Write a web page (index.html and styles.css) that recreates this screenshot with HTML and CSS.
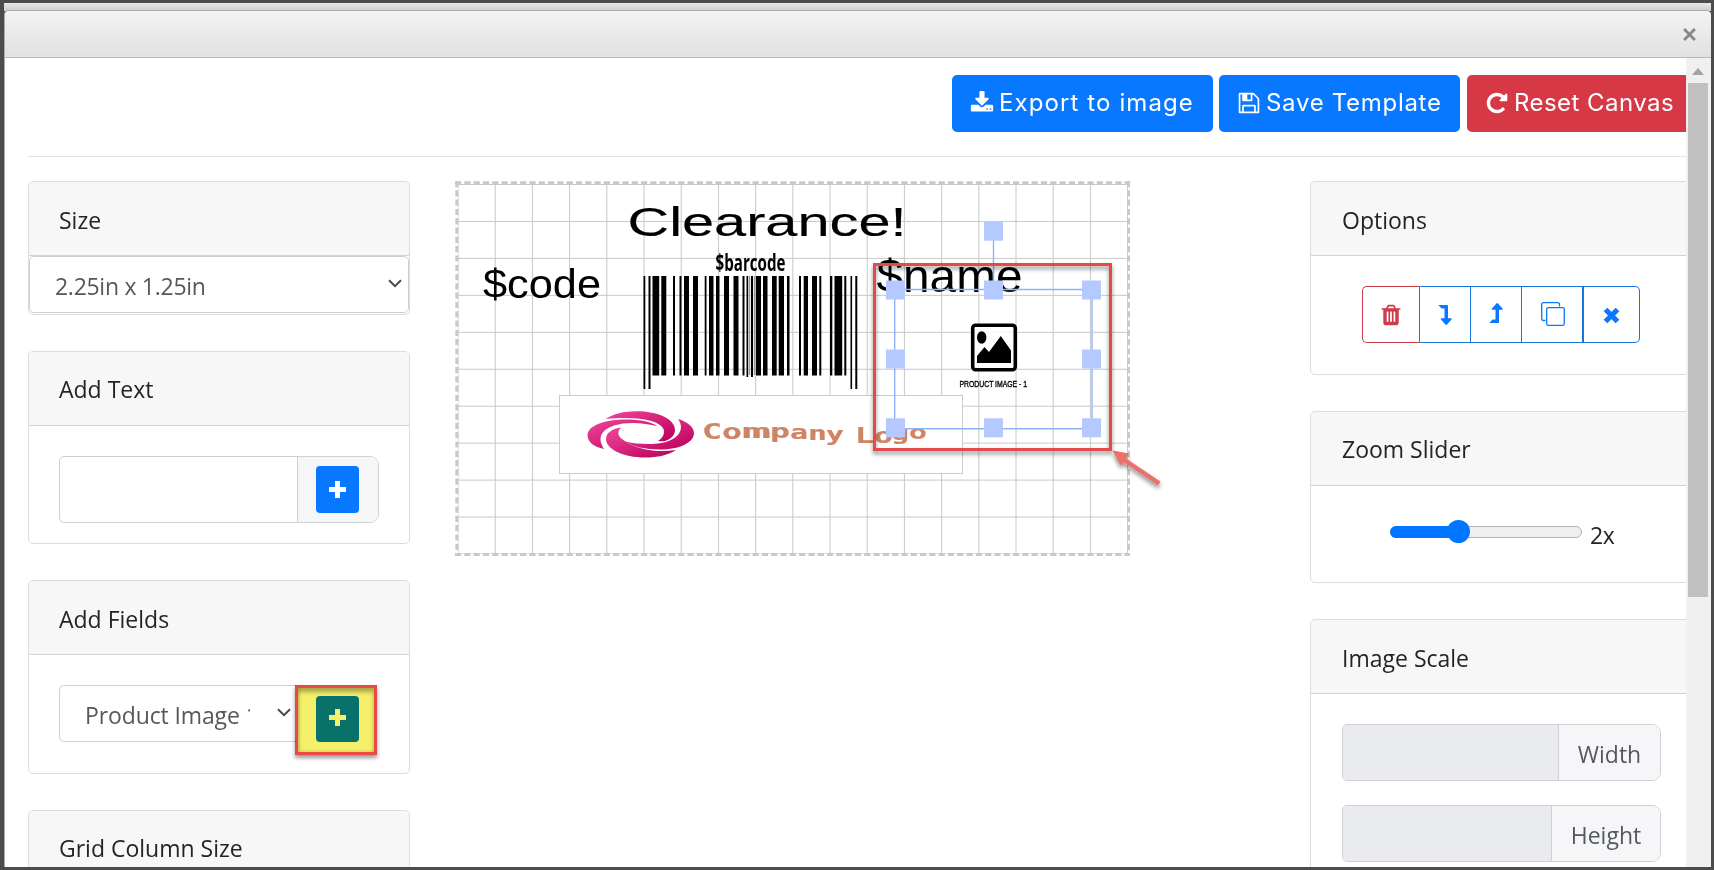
FILE: index.html
```
<!DOCTYPE html>
<html lang="en">
<head>
    <meta charset="UTF-8">
    <title>Label Designer</title>
    <link rel="stylesheet" href="styles.css">
</head>
<body>
<div class="modal">
    <div class="modal-header">
        <svg class="close" viewBox="0 0 12 12"><path d="M1 1l10 10M11 1l-10 10"/></svg>
    </div>
    <div class="modal-body">
        <div class="content">
            <div class="toolbar">
                <button class="btn btn-export">
                    <svg class="fa" viewBox="0 0 1792 1792"><path d="M1344 1344q0-26-19-45t-45-19-45 19-19 45 19 45 45 19 45-19 19-45zm256 0q0-26-19-45t-45-19-45 19-19 45 19 45 45 19 45-19 19-45zm128-224v320q0 40-28 68t-68 28h-1472q-40 0-68-28t-28-68v-320q0-40 28-68t68-28h465l135 136q58 56 136 56t136-56l136-136h464q40 0 68 28t28 68zm-325-569q17 41-14 70l-448 448q-18 19-45 19t-45-19l-448-448q-31-29-14-70 17-39 59-39h256v-448q0-26 19-45t45-19h256q26 0 45 19t19 45v448h256q42 0 59 39z"/></svg>
                    <span>Export to image</span>
                </button>
                <button class="btn btn-save">
                    <svg class="fa" viewBox="0 0 1792 1792"><path d="M512 1536h768v-384h-768v384zm896 0h128v-896q0-14-10-38.5t-20-34.5l-281-281q-10-10-34-20t-39-10v416q0 40-28 68t-68 28h-576q-40 0-68-28t-28-68v-416h-128v1280h128v-416q0-40 28-68t68-28h832q40 0 68 28t28 68v416zm-384-928v-320q0-13-9.5-22.5t-22.5-9.5h-192q-13 0-22.5 9.5t-9.5 22.5v320q0 13 9.5 22.5t22.5 9.5h192q13 0 22.5-9.5t9.5-22.5zm640 32v928q0 40-28 68t-68 28h-1344q-40 0-68-28t-28-68v-1344q0-40 28-68t68-28h928q40 0 88 20t76 48l280 280q28 28 48 76t20 88z"/></svg>
                    <span>Save Template</span>
                </button>
                <button class="btn btn-reset">
                    <svg class="fa" viewBox="0 0 1792 1792"><path d="M1664 256v448q0 26-19 45t-45 19h-448q-42 0-59-40-17-39 14-69l138-138q-148-137-349-137-104 0-198.5 40.5t-163.5 109.5-109.5 163.5-40.5 198.5 40.5 198.5 109.5 163.5 163.5 109.5 198.5 40.5q119 0 225-52t179-147q7-10 23-12 15 0 25 9l137 138q9 8 9.5 20.5t-7.5 22.5q-109 132-264 204.5t-327 72.5q-156 0-298-61t-245-164-164-245-61-298 61-298 164-245 245-164 298-61q147 0 284.5 55.5t244.5 156.5l130-129q29-31 70-14 39 17 39 59z"/></svg>
                    <span>Reset Canvas</span>
                </button>
            </div>
            <div class="columns">
                <div class="side-left">
                    <div class="card card-size">
                        <div class="card-header">Size</div>
                        <div class="select">
                            <span class="select-text">2.25in x 1.25in</span>
                            <svg class="caret" viewBox="0 0 14 9"><path d="M1 1.2l6 6 6-6"/></svg>
                        </div>
                    </div>
                    <div class="card card-text">
                        <div class="card-header">Add Text</div>
                        <div class="card-body">
                            <div class="input-group tall">
                                <div class="input"></div>
                                <div class="addon addon-btn">
                                    <div class="plus"><svg viewBox="0 0 17 17"><path d="M6 0h5v6h6v5h-6v6h-5v-6h-6v-5h6z"/></svg></div>
                                </div>
                            </div>
                        </div>
                    </div>
                    <div class="card card-fields">
                        <div class="card-header">Add Fields</div>
                        <div class="card-body">
                            <div class="field-group">
                                <div class="field-select">
                                    <span class="field-text">Product Image 1</span>
                                    <svg class="caret" viewBox="0 0 14 9"><path d="M1 1.2l6 6 6-6"/></svg>
                                </div>
                                <div class="field-add">
                                    <div class="plus"><svg viewBox="0 0 17 17"><path d="M6 0h5v6h6v5h-6v6h-5v-6h-6v-5h6z"/></svg></div>
                                </div>
                                <div class="highlight"></div>
                            </div>
                        </div>
                    </div>
                    <div class="card">
                        <div class="card-header">Grid Column Size</div>
                        <div class="card-body"></div>
                    </div>
                </div>

                <svg class="canvas" viewBox="455 181 675 375">
                    <defs>
                        <pattern id="grid" x="457.5" y="184" width="37.2" height="36.95" patternUnits="userSpaceOnUse">
                            <path d="M0 .5H38M.5 0V37" stroke="#c8c8c8" stroke-width="1.1" fill="none"/>
                        </pattern>
                        <linearGradient id="pink" x1="0" y1="0" x2="1" y2="1">
                            <stop offset="0" stop-color="#f2459b"/>
                            <stop offset="1" stop-color="#b8005c"/>
                        </linearGradient>
                        <filter id="shadow" x="-10%" y="-10%" width="120%" height="130%">
                            <feDropShadow dx="0" dy="3" stdDeviation="2" flood-color="#000" flood-opacity=".45"/>
                        </filter>
                    </defs>
                    <rect x="458" y="184" width="670" height="370" fill="url(#grid)"/>
                    <path d="M455 182.7H1130M455 554.5H1130" class="dash"/>
                    <path d="M456.8 181V556M1128.5 181V556" class="dash"/>

                    <text x="627.5" y="236" font-size="40" textLength="279" lengthAdjust="spacingAndGlyphs" class="wide">Clearance!</text>
                    <text x="483" y="298" font-size="41.5" textLength="118" lengthAdjust="spacingAndGlyphs">$code</text>
                    <text x="876.5" y="292.3" font-size="47" textLength="146" lengthAdjust="spacingAndGlyphs">$name</text>
                    <text x="715.5" y="270.5" font-size="24" font-weight="bold" textLength="70" lengthAdjust="spacingAndGlyphs" class="narrow">$barcode</text>

                    <!-- barcode -->
                    <g fill="#000">
                        <path d="M643.5 276h1.8v113h-1.8zM648.5 276h2v113h-2zM850.5 276h1.6v113h-1.6zM855.3 276h2v113h-2z"/>
                        <path d="M652.5 276h6.7v99.5h-6.7zM661.3 276h5v99.5h-5zM673 276h2v99.5h-2zM679.5 276h2v99.5h-2zM684 276h5v99.5h-5zM693 276h5v99.5h-5zM704.7 276h1.8v99.5h-1.8zM709 276h4.5v99.5h-4.5zM716 276h3.5v99.5h-3.5zM724 276h5v99.5h-5zM733.5 276h5v99.5h-5zM742.5 276h2v99.5h-2zM746.5 276h1.7v101h-1.7zM751 276h2v101h-2zM756 276h5v99.5h-5zM763 276h4.5v99.5h-4.5zM772 276h4.7v99.5h-4.7zM778.7 276h5.3v99.5h-5.3zM787 276h2.5v99.5h-2.5zM799 276h2v99.5h-2zM803.7 276h4.3v99.5h-4.3zM812 276h5v99.5h-5zM819.3 276h2v99.5h-2zM830 276h2.3v99.5h-2.3zM834.5 276h7.7v99.5h-7.7zM844.3 276h2v99.5h-2z"/>
                        <path d="M753.8 276h1.5v99h-1.5zM749 276h1.2v99h-1.2z" fill="#999"/>
                    </g>

                    <!-- company logo -->
                    <rect x="559.5" y="395.5" width="403" height="78" fill="#fff" stroke="#ccc"/>
                    <g fill="url(#pink)">
                        <path d="M605.5 419C613 414 624 411.3 636 411.3C658 411.3 675 419 675 430C675 435 671 439 665 441C660 441.5 658 441 658.5 440.5C663 438 665 433 663.5 429C659 420.5 640 416 605.5 419z"/>
                        <path d="M604 449C594 447 587.5 442 587.5 435C588 425 606 419.5 626 419.5C640 419.5 652 422 657.5 426.3C645 422.5 626 421.5 614 425.5C601 430 597 438 604 449z"/>
                        <path d="M621 427.5C616.5 432 618 437 624 440.5C637 449.5 655 453 676 450C669 455 657 457.5 645 457.5C623 457.5 606 449 606 439C606 432.5 613 428.5 621 427.5z"/>
                        <path d="M678 419C687 421.5 694 427 694 433C694 443 679 449.5 660 449.5C646 449.5 632 446.5 625.5 441.5C638 444.5 652 444.5 661 443C677 440.5 686 430 678 419z"/>
                    </g>
                    <g class="logo-text">
                        <text x="702" y="439" textLength="40" lengthAdjust="spacingAndGlyphs" font-size="20.5">Co</text>
                        <text x="742" y="437.5" textLength="29" lengthAdjust="spacingAndGlyphs" font-size="19">m</text>
                        <text x="770" y="438" textLength="20" lengthAdjust="spacingAndGlyphs" font-size="19">p</text>
                        <text x="790" y="438.5" textLength="18" lengthAdjust="spacingAndGlyphs" font-size="19">a</text>
                        <text x="808" y="440" textLength="19" lengthAdjust="spacingAndGlyphs" font-size="19">n</text>
                        <text x="826" y="441" textLength="18" lengthAdjust="spacingAndGlyphs" font-size="19">y</text>
                        <text x="855" y="442.5" textLength="38" lengthAdjust="spacingAndGlyphs" font-size="20.5">Lo</text>
                        <text x="891" y="440" textLength="18" lengthAdjust="spacingAndGlyphs" font-size="19">g</text>
                        <text x="909" y="439" textLength="18" lengthAdjust="spacingAndGlyphs" font-size="19">o</text>
                    </g>

                    <!-- product image -->
                    <rect x="972.7" y="325.2" width="42.6" height="44.6" rx="3" fill="#fff" fill-opacity=".8" stroke="#000" stroke-width="3.6"/>
                    <ellipse cx="981.7" cy="337.5" rx="4.7" ry="6.2"/>
                    <path d="M977 363v-7l7.5-9 4.5 5 11.8-16 10.2 14.5v12.5z"/>
                    <text x="959.5" y="386.8" font-size="8.8" textLength="67.5" lengthAdjust="spacingAndGlyphs" stroke="#000" stroke-width=".35">PRODUCT IMAGE - 1</text>

                    <!-- selection box and handles -->
                    <path d="M894.7 289.5H1092V428.7H894.7zM993.5 240V290" fill="none" stroke="#8fb0fb" stroke-width="1.4"/>
                    <path d="M1092 290V428" stroke="#b3caff" stroke-width="2.2"/>
                    <g fill="#b3c9ff">
                        <rect x="984" y="221.7" width="19" height="19"/>
                        <rect x="886" y="280.5" width="19" height="19"/>
                        <rect x="984" y="280.5" width="19" height="19"/>
                        <rect x="1082" y="280.5" width="19" height="19"/>
                        <rect x="886" y="349.5" width="19" height="19"/>
                        <rect x="1082" y="349.5" width="19" height="19"/>
                        <rect x="886" y="418.3" width="19" height="19"/>
                        <rect x="984" y="418.3" width="19" height="19"/>
                        <rect x="1082" y="418.3" width="19" height="19"/>
                    </g>

                    <!-- callout -->
                    <rect x="874.5" y="264.5" width="236" height="185" fill="none" stroke="#e64a48" stroke-width="3" filter="url(#shadow)"/>
                    <path d="M1112.5 450.5L1129 453.5 1126 458.5 1160.5 481.5 1158 485.5 1123.5 462 1120.5 465.5z" fill="#ea6f6b" filter="url(#shadow)"/>
                </svg>

                <div class="side-right">
                    <div class="card card-options">
                        <div class="card-header">Options</div>
                        <div class="card-body">
                            <div class="btn-group">
                                <div class="opt opt-trash"><svg class="fa" viewBox="0 0 1792 1792"><path d="M704 1376v-704q0-14-9-23t-23-9h-64q-14 0-23 9t-9 23v704q0 14 9 23t23 9h64q14 0 23-9t9-23zm256 0v-704q0-14-9-23t-23-9h-64q-14 0-23 9t-9 23v704q0 14 9 23t23 9h64q14 0 23-9t9-23zm256 0v-704q0-14-9-23t-23-9h-64q-14 0-23 9t-9 23v704q0 14 9 23t23 9h64q14 0 23-9t9-23zm-544-992h448l-48-117q-7-9-17-11h-317q-10 2-17 11zm928 32v64q0 14-9 23t-23 9h-96v948q0 83-47 143.5t-113 60.5h-832q-66 0-113-58.5t-47-141.5v-952h-96q-14 0-23-9t-9-23v-64q0-14 9-23t23-9h309l70-167q15-37 54-63t79-26h320q40 0 79 26t54 63l70 167h309q14 0 23 9t9 23z"/></svg></div>
                                <div class="opt"><svg class="level" viewBox="0 0 14 20"><path d="M.3 0H9.2q.8 0 .8.8V13.2h3.2q1 0 .5 1L9 19.5q-.8.8-1.6 0L2.8 14.2q-.5-1 .5-1H6.5V3.5H3.5z"/></svg></div>
                                <div class="opt"><svg class="level level-up" viewBox="0 0 14 20"><path d="M.3 20H9.2q.8 0 .8-.8V6.8h3.2q1 0 .5-1L9 .5q-.8-.8-1.6 0L2.8 5.8q-.5 1 .5 1H6.5V16.5H3.5z"/></svg></div>
                                <div class="opt opt-clone"><svg class="clone" viewBox="0 0 24 24"><path d="M4.5 18.5H2.5Q.7 18.5.7 16.5V2.5Q.7.7 2.5.7H16.5Q18.5.7 18.5 2.5V4.5"/><rect x="5.7" y="5.7" width="17.6" height="17.6" rx="1.5"/></svg></div>
                                <div class="opt opt-times"><svg class="times" viewBox="0 0 17 17"><path d="M2.5 2.5l12 12M14.5 2.5l-12 12"/></svg></div>
                            </div>
                        </div>
                    </div>
                    <div class="card card-zoom">
                        <div class="card-header">Zoom Slider</div>
                        <div class="slider-row">
                            <div class="slider">
                                <div class="slider-fill"></div>
                                <div class="slider-thumb"></div>
                            </div>
                            <span class="slider-value">2x</span>
                        </div>
                    </div>
                    <div class="card card-scale">
                        <div class="card-header">Image Scale</div>
                        <div class="card-body">
                            <div class="input-group">
                                <div class="input disabled"></div>
                                <div class="addon addon-width"><span>Width</span></div>
                            </div>
                            <div class="input-group">
                                <div class="input disabled"></div>
                                <div class="addon addon-height"><span>Height</span></div>
                            </div>
                        </div>
                    </div>
                </div>
            </div>
        </div>
        <div class="scrollbar">
            <svg class="scroll-up" viewBox="0 0 12 7"><path d="M6 0l6 7H0z"/></svg>
            <div class="scroll-thumb"></div>
        </div>
    </div>
</div>
</body>
</html>
```
FILE: styles.css
```
*{ margin:0; padding:0; box-sizing:border-box;}
html, body{ width:1714px; height:870px; overflow:hidden;}
body{ background:linear-gradient(#e9e9e9, #cdcdcd) 0 3px/100% 8px no-repeat #4c4c4c; border:3px solid #4c4c4c; border-left-width:4px; font-family:"Open Sans", "Noto Sans", sans-serif; font-size:23px; color:#212529;}
.modal{ height:857px; margin-top:7px; border:1px solid #aaa; border-right:0; border-bottom:0; border-radius:5px 5px 0 0; background:#fff; overflow:hidden; display:flex; flex-direction:column;}
.modal-header{ flex:none; height:47px; border-bottom:1px solid #b9b9b9; background:linear-gradient(#f3f3f3, #e1e1e1); display:flex; justify-content:flex-end; align-items:center; padding:0 15px 0 0;}
.close{ width:13px; height:13px; fill:none; stroke:#8c8583; stroke-width:2.6;}
.modal-body{ flex:1; display:flex; min-height:0;}
.content{ width:1681px; padding-left:23px; overflow:hidden;}

.toolbar{ height:99px; padding-top:17px; border-bottom:1px solid #e2e3e4; display:flex; padding-left:924px;}
.btn{ flex:none; height:57px; border:0; border-radius:5px; background:#0778ff; color:#fff; font-family:Inter, sans-serif; font-size:24px; display:flex; align-items:center; padding:0 0 2px 18px; white-space:nowrap;}
.fa{ width:24px; height:24px; fill:currentColor; flex:none;}
.btn span{ margin-left:5px;}
.btn-export{ width:261px; margin-right:6px; letter-spacing:1.1px;}
.btn-save{ width:241px; margin-right:7px; letter-spacing:.7px;}
.btn-reset{ width:240px; background:#d63845; letter-spacing:.45px;}

.columns{ display:flex; padding-top:24px;}
.side-left{ flex:none; width:382px;}
.canvas{ flex:none; width:675px; height:375px; margin-left:45px; overflow:visible; font-family:"Liberation Sans", Arial, sans-serif;}
.side-right{ flex:none; width:400px; margin-left:180px;}
.dash{ fill:none; stroke:#c9c9c9; stroke-width:3; stroke-dasharray:6.2 3.1;}
.wide{ stroke:#000; stroke-width:.15;}
.narrow{ font-family:"Open Sans", sans-serif;}
.logo-text{ font-family:"DejaVu Sans Mono", monospace; font-weight:bold; fill:#cf8565; stroke:#cf8565; stroke-width:.2;}

.card{ border:1px solid #dcdcdc; border-radius:5px; margin-bottom:36px; background:#fff;}
.card-header{ height:74px; border-bottom:1px solid #d3d3d4; border-radius:5px 5px 0 0; background:#f7f7f7; line-height:71px; padding:2px 0 0 30px;}
.card-size .card-header, .card-fields .card-header, .card-options .card-header, .card-scale .card-header{ padding-top:3px;}
.card-body{ padding:30px 30px 0;}
.card-size{ height:134px;}
.card-text{ height:193px;}
.card-fields{ height:194px;}
.card-options{ height:194px;}
.card-zoom{ height:172px;}
.card-scale{ height:300px;}

.select{ height:57px; border:1px solid #ced0d2; border-radius:5px; display:flex; align-items:center; justify-content:space-between; padding:0 6px 0 25px; color:#54595e;}
.select-text{ padding-top:3px; letter-spacing:-.28px;}
.caret{ flex:none; width:14px; height:9px; fill:none; stroke:#45494d; stroke-width:2; margin-top:-2px;}

.input-group{ display:flex; width:320px; height:57px; border:1px solid #ced0d3; border-radius:5px 9px 9px 5px; margin-bottom:24px; color:#54595e;}
.input-group.tall{ height:67px;}
.input{ flex:1; border-radius:4px 0 0 4px;}
.input.disabled{ background:#e9ebee;}
.addon{ flex:none; border-left:1px solid #ced0d3; background:#f6f6f9; border-radius:0 8px 8px 0; display:flex; align-items:center; justify-content:center;}
.addon span{ padding-top:2px;}
.addon-btn{ width:81px; padding-right:1px;}
.addon-width{ width:102px;}
.addon-height{ width:109px;}
.plus{ width:43px; height:47px; border-radius:4px; background:#0778ff; display:flex; align-items:center; justify-content:center; padding-bottom:1px;}
.plus svg{ width:17px; height:17px; fill:#fff;}

.field-group{ position:relative; display:flex; width:320px; height:68px; color:#54595e;}
.field-select{ flex:1; height:57px; border:1px solid #ced0d3; border-right:0; border-radius:5px 0 0 5px; display:flex; align-items:center; padding-left:25px;}
.field-text{ width:165px; overflow:hidden; white-space:nowrap; padding-top:3px; letter-spacing:-.12px;}
.field-select .caret{ margin-left:27px;}
.field-add{ width:82px; padding:11px 0 0 19px;}
.field-add .plus{ height:46px; padding-bottom:3px;}
.highlight{ position:absolute; left:236px; top:0; width:82px; height:70px; border:3px solid #e84b46; background:#f5f06a; mix-blend-mode:multiply; box-shadow:0 3px 4px rgba(0,0,0,.4), inset 0 4px 4px rgba(0,0,0,.3), inset 1px -1px 3px rgba(0,0,0,.12);}

.side-right .card-body{ padding-left:31px;}
.side-right .card-header{ padding-left:31px;}
.side-right .input-group{ width:319px;}
.btn-group{ display:flex; width:278px; height:57px; margin-left:20px; color:#0778ff;}
.opt{ width:51px; border:1px solid #1673e0; border-left:0; display:flex; align-items:center; justify-content:center;}
.opt-trash{ width:58px; color:#cc3d49; border:1px solid #cc3d49; border-right-color:#1673e0; border-radius:5px 0 0 5px;}
.opt-clone{ width:62px; border-right-width:2px; padding-left:1px;}
.opt-times{ width:56px; border-radius:0 5px 5px 0;}
.level{ width:14px; height:20px; fill:currentColor;}
.level-up{ margin-bottom:3px;}
.clone{ width:24px; height:24px; fill:none; stroke:currentColor; stroke-width:1.3; margin-bottom:1px;}
.times{ width:17px; height:17px; fill:none; stroke:currentColor; stroke-width:5.2; margin-top:2px;}

.slider-row{ display:flex; align-items:flex-start; padding:40px 0 0 79px;}
.slider{ position:relative; width:192px; height:12px; border:1px solid #b2b2b2; border-radius:6px; background:#efefef;}
.slider-fill{ width:68px; height:12px; margin:-1px; border-radius:6px 0 0 6px; background:#0075ff;}
.slider-thumb{ position:absolute; left:56px; top:-7px; width:23px; height:23px; border-radius:50%; background:#0075ff;}
.slider-value{ margin-left:8px; line-height:32px; margin-top:-7px; letter-spacing:-.4px;}

.scrollbar{ flex:1; background:#f0f0f0; padding:10px 3px 0 2px;}
.scroll-up{ display:block; width:12px; height:7px; margin:0 auto 8px; fill:#a3a3a3;}
.scroll-thumb{ height:514px; background:#c1c1c1;}
```
